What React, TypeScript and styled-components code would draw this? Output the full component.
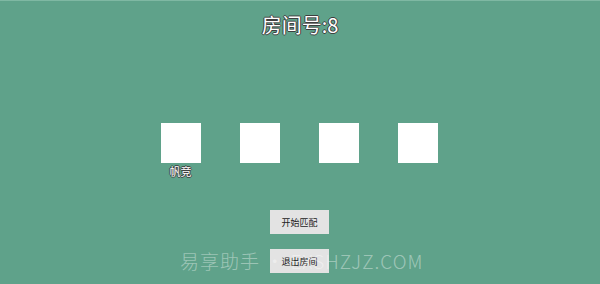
import React from "react";
import styled, { createGlobalStyle } from "styled-components";

const GlobalStyle = createGlobalStyle`
  html, body {
    margin: 0;
    padding: 0;
    background: #5fa28a;
  }
  body {
    font-family: "Noto Sans CJK SC", "Noto Sans", sans-serif;
  }
`;

const Page = styled.div`
  position: relative;
  width: 600px;
  height: 284px;
  overflow: hidden;
  background: #5fa28a;
  border-top: 1px solid #7fb8a3;
  box-sizing: border-box;
  display: flex;
  flex-direction: column;
  align-items: center;
`;

const outline = `
  text-shadow: -1px 0 #3e3e3e, 1px 0 #3e3e3e, 0 -1px #3e3e3e, 0 1px #3e3e3e;
`;

const Title = styled.div`
  margin-top: 10px;
  height: 28px;
  line-height: 28px;
  font-size: 20px;
  color: #ffffff;
  ${outline}
`;

const SeatRow = styled.div`
  margin-top: 84px;
  padding-right: 2px;
  display: flex;
  gap: 39px;
  height: 56px;
`;

const Seat = styled.div`
  width: 40px;
  display: flex;
  flex-direction: column;
  align-items: center;
`;

const Avatar = styled.div`
  width: 40px;
  height: 40px;
  background: #ffffff;
`;

const SeatName = styled.div`
  margin-top: 1px;
  font-size: 11px;
  line-height: 14px;
  color: #ffffff;
  ${outline}
`;

const Actions = styled.div`
  margin-top: 31px;
  padding-right: 1px;
  display: flex;
  flex-direction: column;
  gap: 15px;
`;

const ActionButton = styled.button`
  width: 59px;
  height: 24px;
  padding: 0;
  border: none;
  background: #e3e3e3;
  color: #222;
  font-family: "Noto Sans CJK SC", sans-serif;
  font-size: 9px;
`;

const Watermark = styled.div`
  position: absolute;
  left: 180px;
  top: 247px;
  font-size: 19px;
  font-weight: 300;
  line-height: 26px;
  color: rgba(255, 255, 255, 0.4);
  white-space: nowrap;
  pointer-events: none;
  letter-spacing: 1px;
`;

const seats = ["帆竞", "", "", ""];

export default function App() {
  return (
    <>
      <GlobalStyle />
      <Page>
        <Title>房间号:8</Title>
        <SeatRow>
          {seats.map((name, i) => (
            <Seat key={i}>
              <Avatar />
              {name && <SeatName>{name}</SeatName>}
            </Seat>
          ))}
        </SeatRow>
        <Actions>
          <ActionButton>开始匹配</ActionButton>
          <ActionButton>退出房间</ActionButton>
        </Actions>
        <Watermark>易享助手 • EXSHZJZ.COM</Watermark>
      </Page>
    </>
  );
}
